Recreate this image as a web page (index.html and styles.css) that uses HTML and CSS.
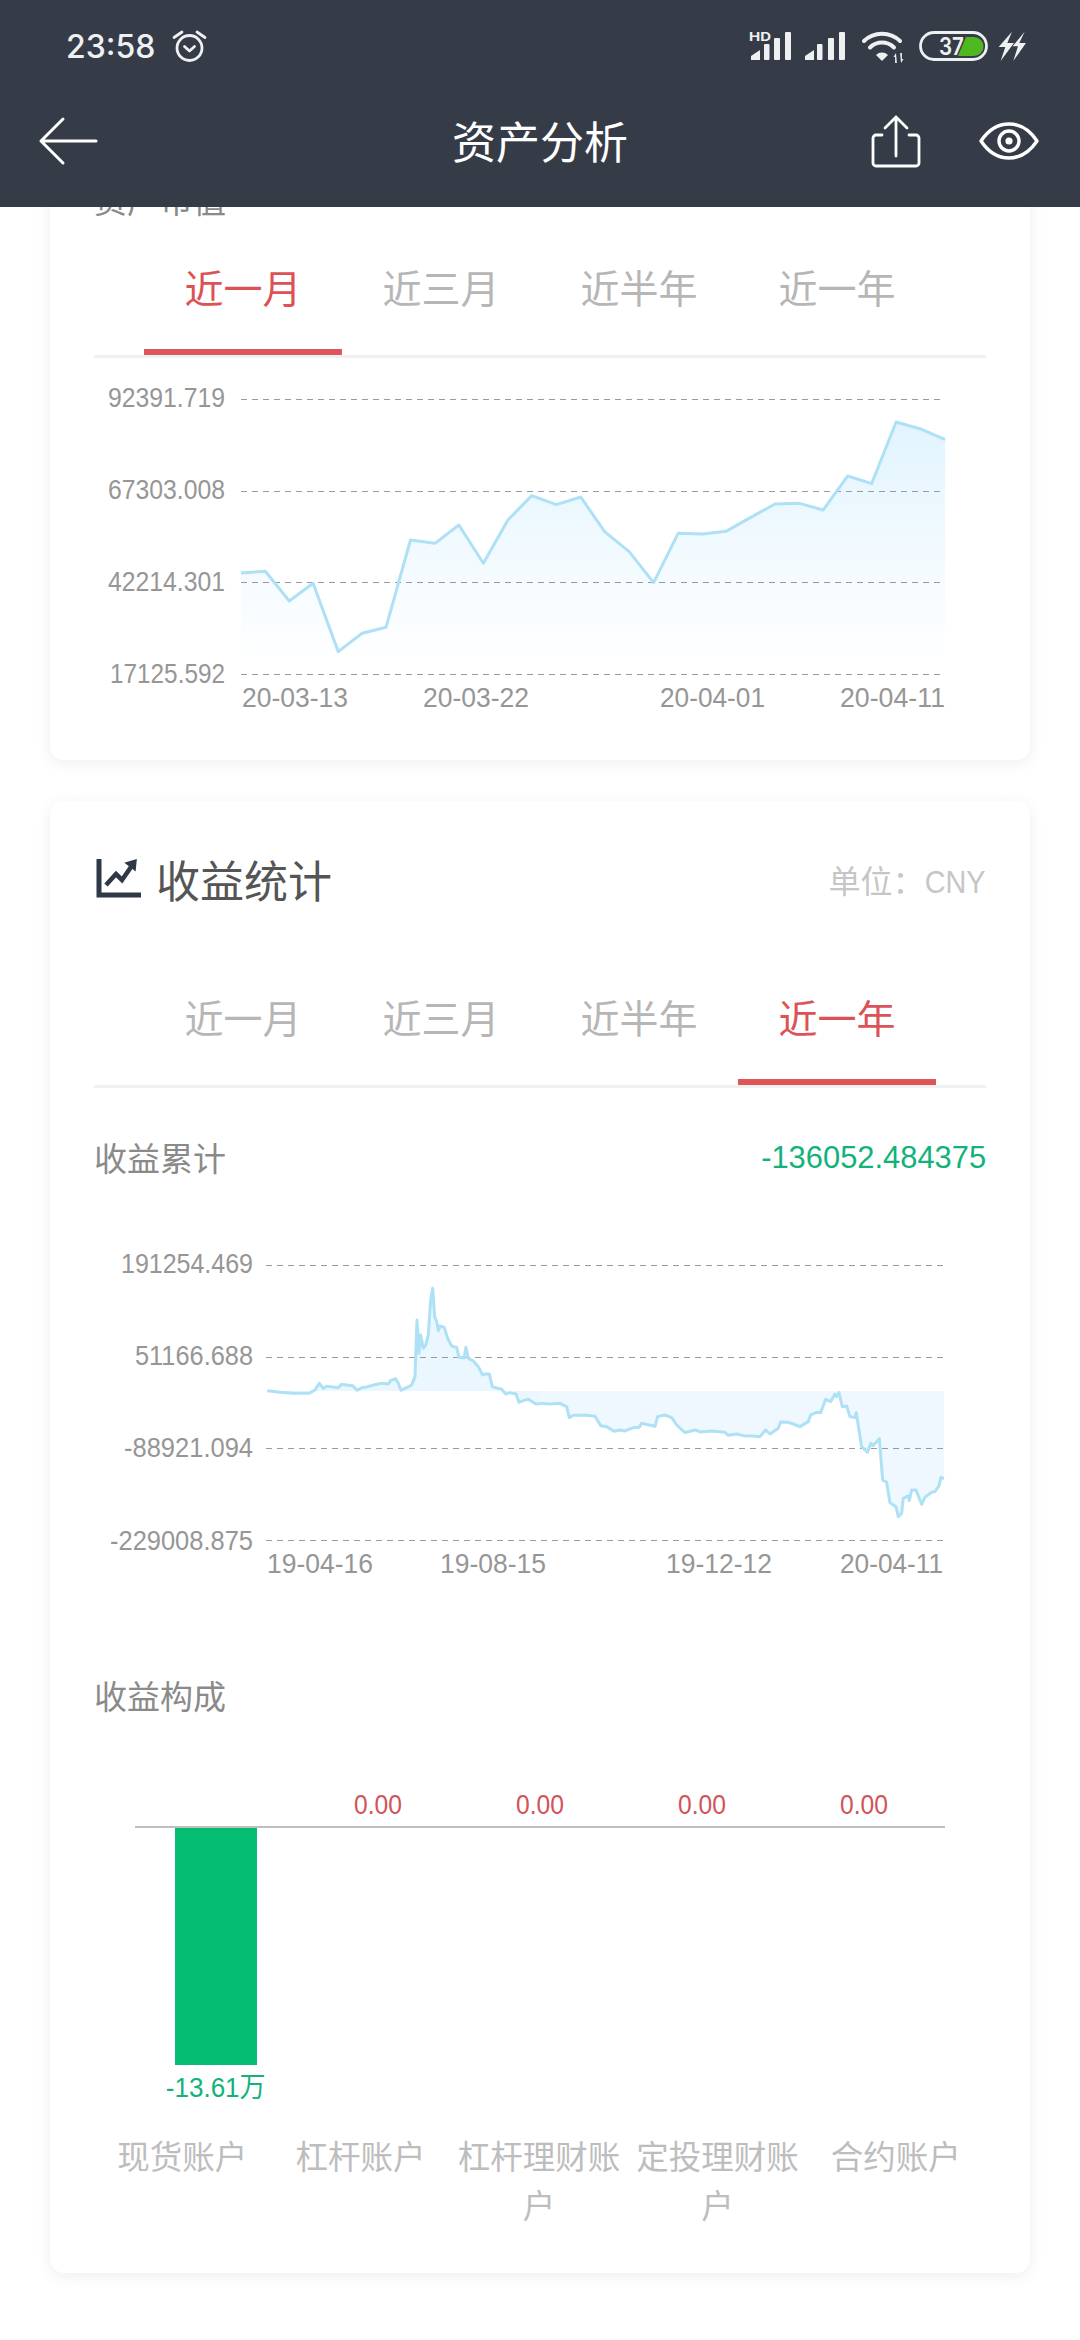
FILE: index.html
```html
<!DOCTYPE html>
<html lang="zh-CN">
<head>
  <meta charset="UTF-8">
  <title>资产分析</title>
  <meta name="viewport" content="width=device-width, initial-scale=1.0">
  <link rel="stylesheet" href="styles.css">
</head>
<body>
  <header class="topbar">
    <div class="status">
      <div class="status-left">
        <span class="clock">23:58</span>
        <svg class="alarm" width="38" height="34" viewBox="0 0 38 34" fill="none" stroke="#eef0f2" stroke-width="2.8" stroke-linecap="round" stroke-linejoin="round">
          <circle cx="18.5" cy="19" r="12.5"/>
          <path d="M13.5 17.5l5 4.5 5-4.5"/>
          <path d="M3 8.5L11 3M34 8.5L26 3"/>
        </svg>
      </div>
      <svg class="status-icons" width="285" height="38" viewBox="745 28 285 38">
        <g fill="#eef0f2">
          <text class="hd" x="749" y="42" textLength="22" lengthAdjust="spacingAndGlyphs">HD</text>
          <path d="M751 61v-4l9-6v10z"/>
          <rect x="764" y="45" width="5.5" height="16" rx="1"/>
          <rect x="774" y="39" width="6" height="22" rx="1"/>
          <rect x="785" y="33" width="6" height="28" rx="1"/>
          <path d="M805 61v-4l9-6v10z"/>
          <rect x="817" y="45" width="5.5" height="16" rx="1"/>
          <rect x="828" y="39" width="6" height="22" rx="1"/>
          <rect x="839" y="33" width="6" height="28" rx="1"/>
          <path d="M882 62l-6-6a8.5 8.5 0 0 1 12 0z"/>
          <path d="M896 54l-2.5 4h1.6v6h1.8z"/>
          <path d="M901 64l2.500-4h-1.600v-6h-1.800z"/>
        </g>
        <g fill="none" stroke="#eef0f2" stroke-width="4" stroke-linecap="round">
          <path d="M864 42a26 26 0 0 1 36 0"/>
          <path d="M870 48.500a17 17 0 0 1 24 0"/>
        </g>
        <rect x="920.500" y="33.500" width="66" height="27" rx="13.500" fill="none" stroke="#eef0f2" stroke-width="2.800"/>
        <path d="M966 38h8a9.500 9.500 0 0 1 0 19h-16z" fill="#4db81f"/>
        <text class="batt" x="939" y="56" textLength="25" lengthAdjust="spacingAndGlyphs">37</text>
        <g fill="#eef0f2" transform="translate(720 10) scale(.3333)">
          <path d="M876 68L836 114h20l-14 42 40-54h-20z"/>
          <path d="M914 68l-36 44h16l-14 44 38-54h-20z"/>
        </g>
      </svg>
    </div>
    <div class="toolbar">
      <svg class="back" width="60" height="50" viewBox="0 0 60 50" fill="none" stroke="#fff" stroke-width="3" stroke-linecap="round" stroke-linejoin="round">
        <path d="M25 3L3 25l22 22M3 25h55"/>
      </svg>
      <h1 class="page-title">资产分析</h1>
      <div class="actions">
        <svg width="52" height="54" viewBox="0 0 52 54" fill="none" stroke="#fff" stroke-width="2.800" stroke-linecap="round" stroke-linejoin="round">
          <path d="M12 21H6a3 3 0 0 0-3 3v25a3 3 0 0 0 3 3h40a3 3 0 0 0 3-3V24a3 3 0 0 0-3-3h-7"/>
          <path d="M26 42V3M15 14L26 3l11 11"/>
        </svg>
        <svg width="60" height="38" viewBox="0 0 60 38" fill="none" stroke="#fff" stroke-width="3.400" stroke-linejoin="round">
          <path d="M2 19C10 7 19 2 30 2s20 5 28 17c-8 12-17 17-28 17S10 31 2 19z"/>
          <circle cx="30" cy="19" r="10"/>
          <circle cx="30" cy="19" r="3.600" fill="#fff" stroke="none"/>
        </svg>
      </div>
    </div>
  </header>

  <main class="scroll">
    <section class="card card-first">
      <h3 class="sub">资产市值</h3>
      <div class="tabs">
        <div class="tab on">近一月</div>
        <div class="tab">近三月</div>
        <div class="tab">近半年</div>
        <div class="tab">近一年</div>
      </div>
      <svg class="chart" width="892" height="402" viewBox="94 358 892 402">
        <defs>
          <linearGradient id="fade" x1="0" y1="0" x2="0" y2="1">
            <stop offset="0" stop-color="#e2f4fe"/>
            <stop offset="1" stop-color="#ffffff"/>
          </linearGradient>
        </defs>
        <g transform="translate(40 370) scale(.6124 .3333)">
          <polygon fill="url(#fade)" points="328,880 328,609 368,604 407,693 446,640 487,845 526,790 565,772 605,510 645,520 684,465 724,580 764,450 803,377 843,404 883,381 922,485 962,545 1002,638 1042,490 1082,492 1120,484 1160,443 1200,402 1240,400 1279,420 1319,318 1358,341 1398,156 1438,177 1478,209 1478,880"/>
        </g>
        <g class="grid">
          <line x1="241" y1="399.5" x2="945" y2="399.5"/>
          <line x1="241" y1="491.5" x2="945" y2="491.5"/>
          <line x1="241" y1="582.5" x2="945" y2="582.5"/>
          <line x1="241" y1="674.5" x2="945" y2="674.5"/>
        </g>
        <g transform="translate(40 370) scale(.6124 .3333)">
          <polyline class="line" points="328,609 368,604 407,693 446,640 487,845 526,790 565,772 605,510 645,520 684,465 724,580 764,450 803,377 843,404 883,381 922,485 962,545 1002,638 1042,490 1082,492 1120,484 1160,443 1200,402 1240,400 1279,420 1319,318 1358,341 1398,156 1438,177 1478,209"/>
        </g>
        <g class="axis-y">
          <text x="225" y="407" textLength="117" lengthAdjust="spacingAndGlyphs">92391.719</text>
          <text x="225" y="499" textLength="117" lengthAdjust="spacingAndGlyphs">67303.008</text>
          <text x="225" y="591" textLength="117" lengthAdjust="spacingAndGlyphs">42214.301</text>
          <text x="225" y="683" textLength="115" lengthAdjust="spacingAndGlyphs">17125.592</text>
        </g>
        <g class="axis-x">
          <text x="242" y="707" textLength="106" lengthAdjust="spacingAndGlyphs">20-03-13</text>
          <text x="423" y="707" textLength="106" lengthAdjust="spacingAndGlyphs">20-03-22</text>
          <text x="660" y="707" textLength="105" lengthAdjust="spacingAndGlyphs">20-04-01</text>
          <text x="840" y="707" textLength="105" lengthAdjust="spacingAndGlyphs">20-04-11</text>
        </g>
      </svg>
    </section>

    <section class="card">
      <div class="card-head">
        <h2 class="card-title">
          <svg width="48" height="42" viewBox="0 0 48 42" fill="none" stroke="#2f3846">
            <path d="M5 1v36h42" stroke-width="5"/>
            <path d="M12 27l10-11 6 6 9-13" stroke-width="4.600"/>
            <path d="M32 5l10-3-1 10z" fill="#2f3846" stroke-width="1.500"/>
          </svg>
          收益统计
        </h2>
        <span class="unit">单位：<span class="unit-code">CNY</span></span>
      </div>
      <div class="tabs">
        <div class="tab">近一月</div>
        <div class="tab">近三月</div>
        <div class="tab">近半年</div>
        <div class="tab on">近一年</div>
      </div>
      <div class="sum-row">
        <h3 class="sub">收益累计</h3>
        <span class="sum-val">-136052.484375</span>
      </div>
      <svg class="chart" width="892" height="421" viewBox="94 1179 892 421">
        <g transform="translate(260 1270) scale(.3333)">
          <polygon fill="#eaf7fe" points="22,363 22,362 60,367 100,370 148,370 165,360 178,340 190,355 200,349 235,353 245,343 265,346 278,347 292,361 305,353 320,351 345,344 365,340 385,342 392,332 407,326 415,340 423,361 440,353 455,345 465,320 471,150 477,250 482,195 490,235 497,225 505,195 512,90 518,55 524,140 530,155 535,182 540,168 553,172 563,205 575,228 590,232 597,262 612,264 618,232 625,265 640,273 655,290 668,315 675,312 688,312 697,350 710,354 725,358 737,372 750,368 768,372 777,397 790,392 805,388 828,402 840,401 840,363"/>
        </g>
        <g transform="translate(540 1250) scale(.3333)">
          <polygon fill="#eef8fe" points="0,423 0,460 30,462 60,460 80,470 88,503 100,496 140,496 165,499 182,527 200,530 222,544 240,540 255,543 280,533 297,532 305,520 345,529 353,500 375,495 395,503 410,525 435,548 465,540 480,546 515,543 555,547 565,556 590,552 610,557 640,558 660,560 677,540 690,552 715,535 722,516 745,517 760,522 780,530 805,515 812,495 830,487 842,488 857,448 872,455 885,432 890,440 897,428 907,470 920,468 930,500 945,503 949,488 965,590 982,607 993,580 1000,587 1018,566 1028,690 1040,697 1050,758 1068,770 1075,800 1085,790 1090,745 1105,738 1108,752 1115,720 1128,720 1145,763 1155,742 1175,727 1185,725 1197,708 1203,682 1212,686 1212,423"/>
        </g>
        <g class="grid">
          <line x1="266" y1="1265.5" x2="943" y2="1265.5"/>
          <line x1="266" y1="1357.5" x2="943" y2="1357.5"/>
          <line x1="266" y1="1448.5" x2="943" y2="1448.5"/>
          <line x1="266" y1="1540.5" x2="943" y2="1540.5"/>
        </g>
        <g transform="translate(260 1270) scale(.3333)">
          <polyline class="line" points="22,362 60,367 100,370 148,370 165,360 178,340 190,355 200,349 235,353 245,343 265,346 278,347 292,361 305,353 320,351 345,344 365,340 385,342 392,332 407,326 415,340 423,361 440,353 455,345 465,320 471,150 477,250 482,195 490,235 497,225 505,195 512,90 518,55 524,140 530,155 535,182 540,168 553,172 563,205 575,228 590,232 597,262 612,264 618,232 625,265 640,273 655,290 668,315 675,312 688,312 697,350 710,354 725,358 737,372 750,368 768,372 777,397 790,392 805,388 828,402 840,401"/>
        </g>
        <g transform="translate(540 1250) scale(.3333)">
          <polyline class="line" points="0,460 30,462 60,460 80,470 88,503 100,496 140,496 165,499 182,527 200,530 222,544 240,540 255,543 280,533 297,532 305,520 345,529 353,500 375,495 395,503 410,525 435,548 465,540 480,546 515,543 555,547 565,556 590,552 610,557 640,558 660,560 677,540 690,552 715,535 722,516 745,517 760,522 780,530 805,515 812,495 830,487 842,488 857,448 872,455 885,432 890,440 897,428 907,470 920,468 930,500 945,503 949,488 965,590 982,607 993,580 1000,587 1018,566 1028,690 1040,697 1050,758 1068,770 1075,800 1085,790 1090,745 1105,738 1108,752 1115,720 1128,720 1145,763 1155,742 1175,727 1185,725 1197,708 1203,682 1212,686"/>
        </g>
        <g class="axis-y">
          <text x="253" y="1273" textLength="132" lengthAdjust="spacingAndGlyphs">191254.469</text>
          <text x="253" y="1365" textLength="118" lengthAdjust="spacingAndGlyphs">51166.688</text>
          <text x="253" y="1457" textLength="129" lengthAdjust="spacingAndGlyphs">-88921.094</text>
          <text x="253" y="1550" textLength="143" lengthAdjust="spacingAndGlyphs">-229008.875</text>
        </g>
        <g class="axis-x">
          <text x="267" y="1573" textLength="106" lengthAdjust="spacingAndGlyphs">19-04-16</text>
          <text x="440" y="1573" textLength="106" lengthAdjust="spacingAndGlyphs">19-08-15</text>
          <text x="666" y="1573" textLength="106" lengthAdjust="spacingAndGlyphs">19-12-12</text>
          <text x="840" y="1573" textLength="103" lengthAdjust="spacingAndGlyphs">20-04-11</text>
        </g>
      </svg>

      <h3 class="sub sub-bars">收益构成</h3>
      <div class="bars">
        <div class="bar-col">
          <div class="bar-top"></div>
          <div class="bar-track">
            <div class="bar-fill"></div>
            <div class="bar-low">-13.61万</div>
          </div>
        </div>
        <div class="bar-col">
          <div class="bar-top">0.00</div>
          <div class="bar-track"></div>
        </div>
        <div class="bar-col">
          <div class="bar-top">0.00</div>
          <div class="bar-track"></div>
        </div>
        <div class="bar-col">
          <div class="bar-top">0.00</div>
          <div class="bar-track"></div>
        </div>
        <div class="bar-col">
          <div class="bar-top">0.00</div>
          <div class="bar-track"></div>
        </div>
      </div>
      <div class="bar-names">
        <div>现货账户</div>
        <div>杠杆账户</div>
        <div>杠杆理财账户</div>
        <div>定投理财账户</div>
        <div>合约账户</div>
      </div>
    </section>
  </main>
</body>
</html>
```

FILE: styles.css
```css
* { box-sizing: border-box; }
body { margin: 0; width: 1080px; height: 2340px; overflow: hidden; background: #fff; display: flex; flex-direction: column; font-family: "Noto Sans CJK SC", "Noto Sans", sans-serif; }
h1, h2, h3 { margin: 0; font-weight: 400; }

.topbar { height: 207px; background: #353c48; flex: none; color: #fff; }
.status { height: 92px; display: flex; justify-content: space-between; align-items: center; padding: 0 50px 0 66px; }
.status-left { display: flex; align-items: center; gap: 16px; }
.clock { font-family: Inter, "Liberation Sans", sans-serif; font-size: 32px; font-weight: 500; color: #eef0f2; }
.hd { font-family: Inter, "Liberation Sans", sans-serif; font-size: 12px; font-weight: 700; }
.batt { font-family: Inter, "Liberation Sans", sans-serif; font-size: 24px; font-weight: 600; fill: #eef0f2; }
.toolbar { height: 115px; padding: 0 41px 17px 38px; display: grid; grid-template-columns: 1fr auto 1fr; align-items: center; }
.page-title { margin: -2px 0 0 3px; font-size: 44px; font-weight: 400; line-height: 1; }
.actions { display: flex; justify-content: flex-end; align-items: center; gap: 57px; }

.scroll { flex: 1; overflow: hidden; padding: 0 50px; }
.card { background: #fff; border-radius: 14px; padding: 50px 44px 0; box-shadow: 0 3px 16px rgba(0, 0, 0, .07); margin-top: 41px; }
.card-first { margin-top: -80px; height: 633px; }
.card:last-child { padding-bottom: 45px; }
.card-head { display: flex; justify-content: space-between; align-items: center; height: 56px; margin-bottom: 48px; }
.card-title { display: flex; align-items: center; gap: 14px; font-size: 44px; line-height: 52px; color: #555; }
.unit { font-size: 32px; color: #c6c6c6; }
.unit-code { display: inline-block; margin-left: -6px; font-family: "Liberation Sans", sans-serif; transform: scaleX(.9); transform-origin: right center; }
.sub { font-size: 33px; line-height: 44px; color: #8a8a8a; }

.tabs { display: flex; padding: 0 50px; border-bottom: 3px solid #f1f1f1; }
.card-first .tabs { margin-top: 4px; }
.tab { flex: 1; height: 130px; padding-bottom: 2px; border-bottom: 6px solid transparent; display: flex; align-items: center; justify-content: center; font-size: 39px; color: #b6b6b6; }
.tab.on { color: #dc5256; border-color: #e05558; }

.chart { display: block; }
.grid line { stroke: #9a9a9a; stroke-width: 1; stroke-dasharray: 6 5; }
.line { fill: none; stroke: #aee0f6; stroke-width: 3; stroke-linejoin: round; vector-effect: non-scaling-stroke; }
.axis-y text, .axis-x text { font-family: "Liberation Sans", sans-serif; font-size: 28px; fill: #969696; }
.axis-y text { text-anchor: end; }

.sum-row { display: flex; justify-content: space-between; align-items: center; margin-top: 47px; }
.sum-val { display: inline-block; font-family: "Liberation Sans", sans-serif; font-size: 32px; color: #12b27a; transform: scaleX(.965); transform-origin: right center; }
.sub-bars { margin-top: 73px; }

.bars { display: grid; grid-template-columns: repeat(5, 162px); margin: 69px 41px 0; }
.bar-col { display: flex; flex-direction: column; }
.bar-top { height: 40px; line-height: 38px; text-align: center; font-family: "Liberation Sans", sans-serif; font-size: 28px; color: #d0545a; transform: scaleX(.88); }
.bar-track { height: 304px; border-top: 2px solid #c0c0c0; display: flex; flex-direction: column; align-items: center; }
.bar-fill { width: 82px; height: 237px; background: #04bd73; }
.bar-low { margin-top: 5px; line-height: 36px; font-family: "Liberation Sans", "Noto Sans CJK SC", sans-serif; font-size: 28px; color: #12b27a; transform: scaleX(.93); }
.bar-names { display: grid; grid-template-columns: repeat(5, 1fr); margin: 0 1px 0 -1px; font-size: 32.5px; line-height: 49px; color: #bdbdbd; text-align: center; }
```
